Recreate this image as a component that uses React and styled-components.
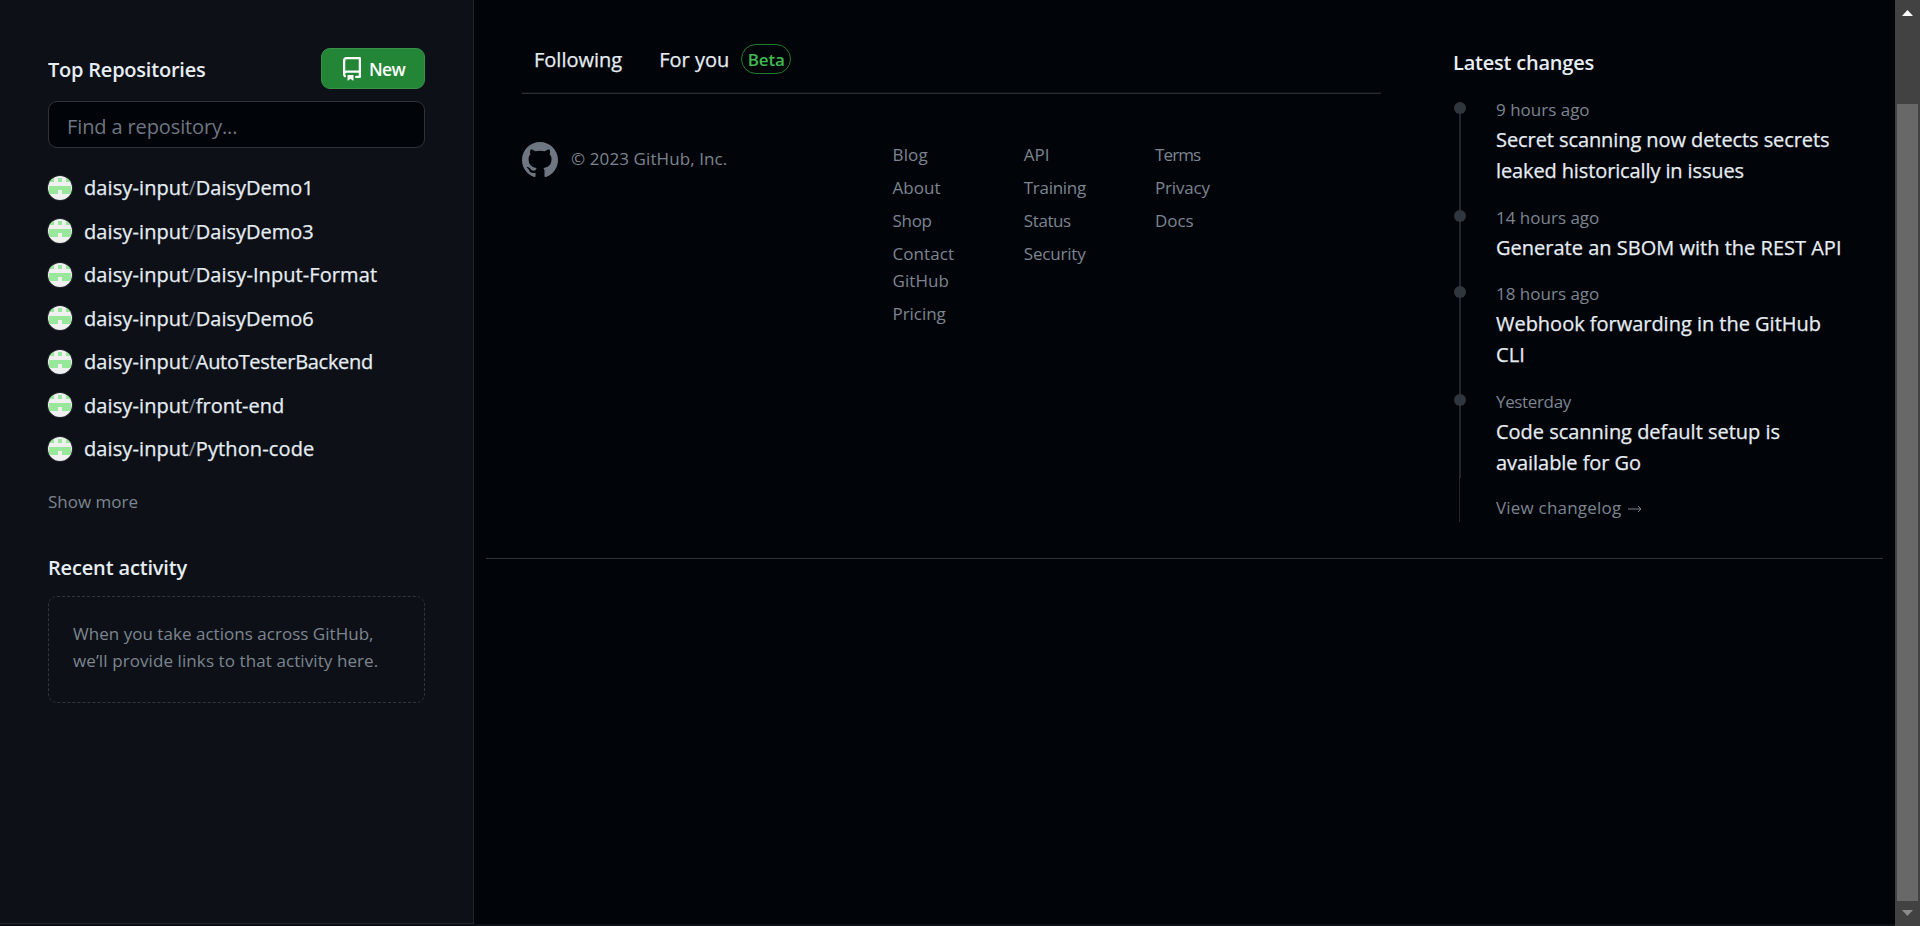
import React from "react";
import styled, { createGlobalStyle, css } from "styled-components";

const GlobalStyle = createGlobalStyle`
  *, *::before, *::after { box-sizing: border-box; }
  html, body { margin: 0; padding: 0; overflow: hidden; background: #0d0f16; }
  body { font-family: "Open Sans", "Noto Sans", sans-serif; font-size: 20px; color: #e6edf3; }
  ul, h2, p { margin: 0; padding: 0; list-style: none; font-weight: inherit; font-size: inherit; }
`;

const large = css`
  font-size: 20px;
  line-height: 31.5px;
  -webkit-text-stroke: 0.25px currentColor;
`;
const small = css`
  font-size: 17px;
  line-height: 27px;
  color: #7d8590;
`;

const Page = styled.div`
  display: flex;
  width: 1920px;
  height: 926px;
`;

const Columns = styled.div`
  display: flex;
  flex: 1;
  height: 924px;
`;

const Sidebar = styled.aside`
  width: 474px;
  padding: 48px 48px 0;
  background: #0d1117;
  border-right: 1px solid #22252b;
  border-bottom: 1px solid #22252b;
`;

const SidebarHeader = styled.div`
  display: flex;
  align-items: center;
  justify-content: space-between;
  height: 41px;
`;

const Heading = styled.h2`
  font-size: 20px;
  line-height: 32px;
  font-weight: 600;
  white-space: nowrap;
  letter-spacing: ${(p) => p.$tracking || 0}px;
`;

const SidebarTitle = styled(Heading)`
  padding-top: 3px;
`;

const NewButton = styled.button`
  display: flex;
  align-items: center;
  gap: 5px;
  width: 104px;
  height: 41px;
  padding: 1px 0 0 18px;
  border: 1px solid #38924a;
  border-radius: 9px;
  background: #238636;
  color: #fff;
  font: 600 17.5px/26px "Open Sans", sans-serif;
  letter-spacing: -0.7px;
`;

const RepoIcon = styled.svg`
  width: 24px;
  height: 24px;
  fill: currentColor;
`;

const SearchInput = styled.input`
  display: block;
  width: 377px;
  height: 47px;
  margin-top: 12px;
  padding: 3px 18px 0;
  border: 1px solid #30343a;
  border-radius: 9px;
  background: #010409;
  font: 400 20px/30px "Open Sans", sans-serif;
  letter-spacing: -0.12px;
  &::placeholder { color: #6e7681; opacity: 1; }
`;

const RepoList = styled.ul`
  margin-top: 18px;
`;

const RepoRow = styled.li`
  display: flex;
  align-items: center;
  gap: 12px;
  height: 43.5px;
  white-space: nowrap;
  ${large}
`;

const Avatar = styled.svg`
  width: 24px;
  height: 24px;
  border-radius: 50%;
  background: #f0f0f0;
  box-shadow: 0 0 0 1px rgba(240, 246, 252, 0.1);
  fill: #98e79a;
`;

const RepoOwner = styled.span`
  letter-spacing: 0.1px;
`;

const RepoSlash = styled.span`
  color: #7d8590;
  -webkit-text-stroke: 0;
`;

const RepoName = styled.span`
  letter-spacing: ${(p) => p.$tracking}px;
`;

const ShowMore = styled.p`
  ${small}
  margin: 17.25px 0 0;
`;

const ActivityTitle = styled(Heading)`
  margin-top: 37.5px;
`;

const ActivityBox = styled.div`
  ${small}
  width: 377px;
  height: 107px;
  margin-top: 11.75px;
  padding: 23px 0 0 24px;
  border: 1px dashed #30363d;
  border-radius: 9px;
  white-space: nowrap;
`;

const ActivityLine = styled.p`
  letter-spacing: ${(p) => p.$tracking}px;
`;

const Main = styled.main`
  flex: 1;
  padding: 0 12px;
  background: #010409;
`;

const MainContent = styled.div`
  display: flex;
  justify-content: space-between;
  height: 559px;
  padding: 44px 12px 0 36px;
  border-bottom: 1px solid #30343a;
`;

const Feed = styled.section`
  width: 859px;
`;

const Tabs = styled.nav`
  display: flex;
  height: 50px;
  padding-left: 12px;
  border-bottom: 1px solid #292d32;
  box-shadow: inset 0 -1px #101419;
`;

const Tab = styled.div`
  ${large}
  display: flex;
  align-items: center;
  height: 30px;
  margin-right: 37px;
`;

const TabLabel = styled.span`
  padding-top: 1px;
`;

const BetaLabel = styled.span`
  height: 30px;
  width: 50px;
  margin-left: 12px;
  border: 1px solid #1f7e31;
  border-radius: 15px;
  color: #3fb950;
  font-size: 17px;
  line-height: 29px;
  font-weight: 600;
  letter-spacing: -0.2px;
  text-align: center;
  -webkit-text-stroke: 0;
`;

const FeedFooter = styled.footer`
  display: flex;
  margin-top: 47px;
`;

const Copyright = styled.div`
  ${small}
  display: flex;
  gap: 13px;
  width: 370.5px;
  padding-top: 1px;
  letter-spacing: 0.1px;
`;

const CopyrightText = styled.span`
  padding-top: 3px;
`;

const MarkIcon = styled.svg`
  width: 36px;
  height: 36px;
  fill: #6e7681;
`;

const LinkColumn = styled.ul`
  width: 131.3px;
  padding-right: 40px;
`;

const FooterLink = styled.li`
  ${small}
  margin-bottom: 6px;
  letter-spacing: ${(p) => p.$tracking || 0}px;
`;

const Changes = styled.section`
  width: 418px;
  padding-top: 3px;
`;

const Timeline = styled.ul`
  margin-top: 17.4px;
`;

const TimelineItem = styled.li`
  position: relative;
  padding: 0 0 17.3px 43px;
  white-space: nowrap;

  &::before {
    content: "";
    position: absolute;
    left: 6px;
    top: 6px;
    bottom: -6px;
    width: 2px;
    background: #23272d;
  }
  &:last-child { height: 89.6px; padding-bottom: 0; }
  &:last-child::before { bottom: 0; }
`;

const Dot = styled.span`
  position: absolute;
  left: 1px;
  top: 5.6px;
  width: 12px;
  height: 12px;
  border-radius: 50%;
  background: #30363d;
`;

const ChangeTime = styled.p`
  ${small}
  margin-bottom: 0.5px;
  letter-spacing: ${(p) => p.$tracking || 0}px;
`;

const ChangeLine = styled.p`
  ${large}
  letter-spacing: ${(p) => p.$tracking || 0}px;
`;

const ChangelogLink = styled.p`
  ${small}
  display: flex;
  align-items: center;
  gap: 7px;
  height: 44px;
  margin-left: 6px;
  padding: 15px 0 0 36px;
  border-left: 1px solid #23272d;
  letter-spacing: 0.2px;
`;

const ArrowIcon = styled.svg`
  width: 14px;
  height: 8px;
  margin-top: 3px;
  fill: none;
  stroke: currentColor;
`;

const Scrollbar = styled.div`
  display: flex;
  flex-direction: column;
  align-items: center;
  width: 25px;
  height: 926px;
  padding: 10px 2px 0;
  background: #424242;
`;

const ScrollArrow = styled.svg`
  width: 11px;
  height: 6px;
  fill: ${(p) => p.$color};
`;

const Thumb = styled.div`
  width: 21px;
  height: 797px;
  margin: 88px 0 9px;
  background: #686868;
`;

const repos = [
  ["DaisyDemo1", 0],
  ["DaisyDemo3", 0],
  ["Daisy-Input-Format", 0.08],
  ["DaisyDemo6", 0],
  ["AutoTesterBackend", -0.3],
  ["front-end", 0],
  ["Python-code", 0.12],
];

const linkColumns = [
  [["Blog", 0.15], ["About", 0.05], ["Shop", -0.3], ["Contact GitHub", 0.07], ["Pricing", -0.05]],
  [["API", 0], ["Training", -0.3], ["Status", -0.4], ["Security", -0.2]],
  [["Terms", -0.9], ["Privacy", -0.2], ["Docs", -0.07]],
];

const changes = [
  { time: "9 hours ago", lines: [["Secret scanning now detects secrets", -0.08], ["leaked historically in issues", -0.12]] },
  { time: "14 hours ago", lines: [["Generate an SBOM with the REST API", 0.01]] },
  { time: "18 hours ago", lines: [["Webhook forwarding in the GitHub", -0.02], ["CLI", 0.1]] },
  { time: "Yesterday", tracking: -0.35, lines: [["Code scanning default setup is", -0.02], ["available for Go", -0.05]] },
];

function Identicon() {
  return (
    <Avatar viewBox="0 0 24 24">
      <path d="M1 2h5v4H1zM10 2h4v4h-4zM18 2h5v4h-5zM1 10h22v8h-9v-4h-4v4H1z" />
    </Avatar>
  );
}

export default function App() {
  return (
    <Page>
      <GlobalStyle />
      <Columns>
        <Sidebar>
          <SidebarHeader>
            <SidebarTitle $tracking={-0.22}>Top Repositories</SidebarTitle>
            <NewButton>
              <RepoIcon viewBox="0 0 16 16">
                <path d="M2 2.5A2.5 2.5 0 0 1 4.5 0h8.75a.75.75 0 0 1 .75.75v12.5a.75.75 0 0 1-.75.75h-2.5a.75.75 0 0 1 0-1.5h1.75v-2h-8a1 1 0 0 0-.714 1.7.75.75 0 1 1-1.072 1.05A2.495 2.495 0 0 1 2 11.5Zm10.5-1h-8a1 1 0 0 0-1 1v6.708A2.486 2.486 0 0 1 4.5 9h8ZM5 12.25a.25.25 0 0 1 .25-.25h3.5a.25.25 0 0 1 .25.25v3.25a.25.25 0 0 1-.4.2l-1.45-1.087a.249.249 0 0 0-.3 0L5.4 15.7a.25.25 0 0 1-.4-.2Z" />
              </RepoIcon>
              New
            </NewButton>
          </SidebarHeader>
          <SearchInput placeholder="Find a repository..." />
          <RepoList>
            {repos.map(([name, tracking]) => (
              <RepoRow key={name}>
                <Identicon />
                <span>
                  <RepoOwner>daisy-input</RepoOwner>
                  <RepoSlash>/</RepoSlash>
                  <RepoName $tracking={tracking}>{name}</RepoName>
                </span>
              </RepoRow>
            ))}
          </RepoList>
          <ShowMore>Show more</ShowMore>
          <ActivityTitle $tracking={-0.16}>Recent activity</ActivityTitle>
          <ActivityBox>
            <ActivityLine $tracking={0.03}>When you take actions across GitHub,</ActivityLine>
            <ActivityLine $tracking={0.09}>we’ll provide links to that activity here.</ActivityLine>
          </ActivityBox>
        </Sidebar>
        <Main>
          <MainContent>
            <Feed>
              <Tabs>
                <Tab>
                  <TabLabel>Following</TabLabel>
                </Tab>
                <Tab>
                  <TabLabel>For you</TabLabel>
                  <BetaLabel>Beta</BetaLabel>
                </Tab>
              </Tabs>
              <FeedFooter>
                <Copyright>
                  <MarkIcon viewBox="0 0 16 16">
                    <path d="M8 0c4.42 0 8 3.58 8 8a8.013 8.013 0 0 1-5.45 7.59c-.4.08-.55-.17-.55-.38 0-.27.01-1.13.01-2.2 0-.75-.25-1.23-.54-1.48 1.78-.2 3.65-.88 3.65-3.95 0-.88-.31-1.59-.82-2.15.08-.2.36-1.02-.08-2.12 0 0-.67-.22-2.2.82-.64-.18-1.32-.27-2-.27-.68 0-1.36.09-2 .27-1.53-1.03-2.2-.82-2.2-.82-.44 1.1-.16 1.92-.08 2.12-.51.56-.82 1.28-.82 2.15 0 3.06 1.86 3.75 3.64 3.95-.23.2-.44.55-.51 1.07-.46.21-1.61.55-2.33-.66-.15-.24-.6-.83-1.23-.82-.67.01-.27.38.01.53.34.19.73.9.82 1.13.16.45.68 1.31 2.69.94 0 .67.01 1.3.01 1.49 0 .21-.15.45-.55.38A7.995 7.995 0 0 1 0 8c0-4.42 3.58-8 8-8Z" />
                  </MarkIcon>
                  <CopyrightText>© 2023 GitHub, Inc.</CopyrightText>
                </Copyright>
                {linkColumns.map((links) => (
                  <LinkColumn key={links[0][0]}>
                    {links.map(([label, tracking]) => (
                      <FooterLink key={label} $tracking={tracking}>{label}</FooterLink>
                    ))}
                  </LinkColumn>
                ))}
              </FeedFooter>
            </Feed>
            <Changes>
              <Heading $tracking={-0.22}>Latest changes</Heading>
              <Timeline>
                {changes.map(({ time, tracking, lines }) => (
                  <TimelineItem key={time}>
                    <Dot />
                    <ChangeTime $tracking={tracking}>{time}</ChangeTime>
                    {lines.map(([text, lineTracking]) => (
                      <ChangeLine key={text} $tracking={lineTracking}>{text}</ChangeLine>
                    ))}
                  </TimelineItem>
                ))}
              </Timeline>
              <ChangelogLink>
                View changelog
                <ArrowIcon viewBox="0 0 14 8">
                  <path d="M0 4h13M10 1l3 3-3 3" />
                </ArrowIcon>
              </ChangelogLink>
            </Changes>
          </MainContent>
        </Main>
      </Columns>
      <Scrollbar>
        <ScrollArrow $color="#ffffff" viewBox="0 0 11 6">
          <path d="M5.5 0L11 6H0z" />
        </ScrollArrow>
        <Thumb />
        <ScrollArrow $color="#8b8b8b" viewBox="0 0 11 6">
          <path d="M0 0h11L5.5 6z" />
        </ScrollArrow>
      </Scrollbar>
    </Page>
  );
}
